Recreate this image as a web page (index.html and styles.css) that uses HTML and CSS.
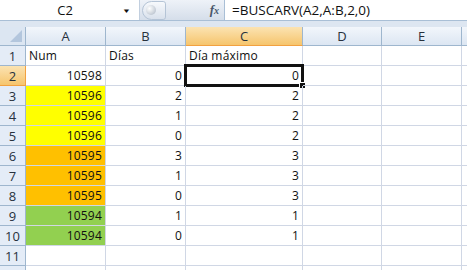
FILE: index.html
```html
<!DOCTYPE html>
<html lang="es">
<head>
    <meta charset="UTF-8">
    <title>Hoja de cálculo</title>
    <link rel="stylesheet" href="styles.css">
</head>
<body>
    <!-- Barra de fórmulas -->
    <div class="formula-bar">
        <div class="name-box">
            <span class="name-text">C2</span>
            <span class="name-arrow">&#9660;</span>
        </div>
        <div class="fx-area">
            <span class="grip"><span class="grip-dot"></span></span>
            <span class="fx">f<small>x</small></span>
        </div>
        <div class="formula-input">=BUSCARV(A2,A:B,2,0)</div>
    </div>

    <!-- Hoja -->
    <div class="sheet">
        <div class="hd corner"><span class="corner-tri"></span></div>
        <div class="hd col">A</div>
        <div class="hd col">B</div>
        <div class="hd col active">C</div>
        <div class="hd col">D</div>
        <div class="hd col">E</div>
        <div class="hd col"></div>

        <div class="hd row">1</div>
        <div class="cell">Num</div>
        <div class="cell">Días</div>
        <div class="cell">Día máximo</div>
        <div class="cell"></div><div class="cell"></div><div class="cell"></div>

        <div class="hd row active">2</div>
        <div class="cell num">10598</div>
        <div class="cell num">0</div>
        <div class="cell num selected">0<span class="sel-box"><span class="handle"></span></span></div>
        <div class="cell"></div><div class="cell"></div><div class="cell"></div>

        <div class="hd row">3</div>
        <div class="cell num yellow">10596</div>
        <div class="cell num">2</div>
        <div class="cell num">2</div>
        <div class="cell"></div><div class="cell"></div><div class="cell"></div>

        <div class="hd row">4</div>
        <div class="cell num yellow">10596</div>
        <div class="cell num">1</div>
        <div class="cell num">2</div>
        <div class="cell"></div><div class="cell"></div><div class="cell"></div>

        <div class="hd row">5</div>
        <div class="cell num yellow">10596</div>
        <div class="cell num">0</div>
        <div class="cell num">2</div>
        <div class="cell"></div><div class="cell"></div><div class="cell"></div>

        <div class="hd row">6</div>
        <div class="cell num orange">10595</div>
        <div class="cell num">3</div>
        <div class="cell num">3</div>
        <div class="cell"></div><div class="cell"></div><div class="cell"></div>

        <div class="hd row">7</div>
        <div class="cell num orange">10595</div>
        <div class="cell num">1</div>
        <div class="cell num">3</div>
        <div class="cell"></div><div class="cell"></div><div class="cell"></div>

        <div class="hd row">8</div>
        <div class="cell num orange">10595</div>
        <div class="cell num">0</div>
        <div class="cell num">3</div>
        <div class="cell"></div><div class="cell"></div><div class="cell"></div>

        <div class="hd row">9</div>
        <div class="cell num green">10594</div>
        <div class="cell num">1</div>
        <div class="cell num">1</div>
        <div class="cell"></div><div class="cell"></div><div class="cell"></div>

        <div class="hd row">10</div>
        <div class="cell num green">10594</div>
        <div class="cell num">0</div>
        <div class="cell num">1</div>
        <div class="cell"></div><div class="cell"></div><div class="cell"></div>

        <div class="hd row">11</div>
        <div class="cell"></div><div class="cell"></div><div class="cell"></div>
        <div class="cell"></div><div class="cell"></div><div class="cell"></div>

        <!-- fila 12, solo asoma el borde -->
        <div class="hd row"></div>
        <div class="cell"></div><div class="cell"></div><div class="cell"></div>
        <div class="cell"></div><div class="cell"></div><div class="cell"></div>
    </div>
</body>
</html>
```

FILE: styles.css
```css
/* Hoja estilo Excel 2007 */
body {
    margin: 0;
    font-family: "Open Sans", Arial, sans-serif;
    background-color: #dde6f1;
    overflow: hidden;
    width: 467px;
    height: 270px;
}

.formula-bar {
    display: flex;
    height: 20px;
    border-bottom: 1px solid #a9bfd6;
    background-color: #fff;
    margin-bottom: 6px;
}

.name-box {
    width: 140px;
    display: flex;
    align-items: center;
    background-color: #fff;
    border-right: 1px solid #c2cfdf;
    box-sizing: border-box;
}

.name-text {
    flex: 1;
    text-align: center;
    font-size: 13px;
    color: #111;
    padding-left: 8px;
}

.name-arrow {
    font-size: 9px;
    color: #111;
    margin-right: 8px;
    transform: scaleY(0.7);
}

.fx-area {
    width: 85px;
    display: flex;
    align-items: center;
    justify-content: space-between;
    background: linear-gradient(#eef2f8, #d5deea);
    border-right: 1px solid #a9bfd6;
    box-sizing: border-box;
}

.grip {
    width: 24px;
    height: 19px;
    margin-left: 2px;
    border-radius: 10px 3px 3px 10px;
    background: linear-gradient(#f7f9fc, #d9e1ec);
    border: 1px solid #b5c4d6;
    box-sizing: border-box;
    display: flex;
    align-items: center;
    padding-left: 3px;
}

.grip-dot {
    width: 10px;
    height: 10px;
    border-radius: 50%;
    background: radial-gradient(circle at 35% 35%, #ffffff, #aab5c3);
}

.fx {
    font-family: "Liberation Serif", serif;
    font-style: italic;
    font-weight: bold;
    font-size: 13px;
    color: #49576a;
    margin-right: 5px;
}

.fx small {
    font-size: 10px;
}

.formula-input {
    flex: 1;
    font-size: 13.5px;
    line-height: 20px;
    padding-left: 7px;
    color: #111;
}

.sheet {
    display: grid;
    grid-template-columns: 26px 80px 80px 117px 79px 80px 1fr;
    grid-template-rows: 19px repeat(12, 20px);
    background-color: #fff;
}

.hd {
    background: linear-gradient(#f2f6fb, #dce6f2);
    color: #27313d;
    font-size: 13px;
    display: flex;
    align-items: center;
    justify-content: center;
    box-sizing: border-box;
}

.hd.col {
    border-right: 1px solid #9eb6ce;
    border-bottom: 1px solid #9eb6ce;
}

.hd.row {
    background: #e4ecf7;
    border-right: 1px solid #9eb6ce;
    border-bottom: 1px solid #9eb6ce;
}

.hd.active {
    background: linear-gradient(#fbe3b2, #f6c56d);
    border-bottom-color: #f2a140;
}

.hd.row.active {
    border-right-color: #f2a140;
}

.corner {
    background: #dce6f2;
    border-right: 1px solid #9eb6ce;
    border-bottom: 1px solid #9eb6ce;
    position: relative;
}

.corner-tri {
    position: absolute;
    right: 3px;
    bottom: 3px;
    width: 0;
    height: 0;
    border-left: 12px solid transparent;
    border-bottom: 12px solid #b3c6dd;
}

.cell {
    font-size: 12px;
    letter-spacing: 0.2px;
    color: #111;
    border-right: 1px solid #d0d7e5;
    border-bottom: 1px solid #d0d7e5;
    box-sizing: border-box;
    padding: 0 3px;
    line-height: 20px;
    white-space: nowrap;
    position: relative;
}

.num {
    text-align: right;
}

.yellow {
    background-color: #ffff00;
}

.orange {
    background-color: #ffc000;
}

.green {
    background-color: #92d050;
}

/* Celda activa */
.sel-box {
    position: absolute;
    left: -2px;
    top: -2px;
    right: -2px;
    bottom: -2px;
    border: 3px solid #111;
}

.handle {
    position: absolute;
    right: -5px;
    bottom: -5px;
    width: 5px;
    height: 5px;
    background-color: #111;
    border: 1px solid #fff;
}
```
